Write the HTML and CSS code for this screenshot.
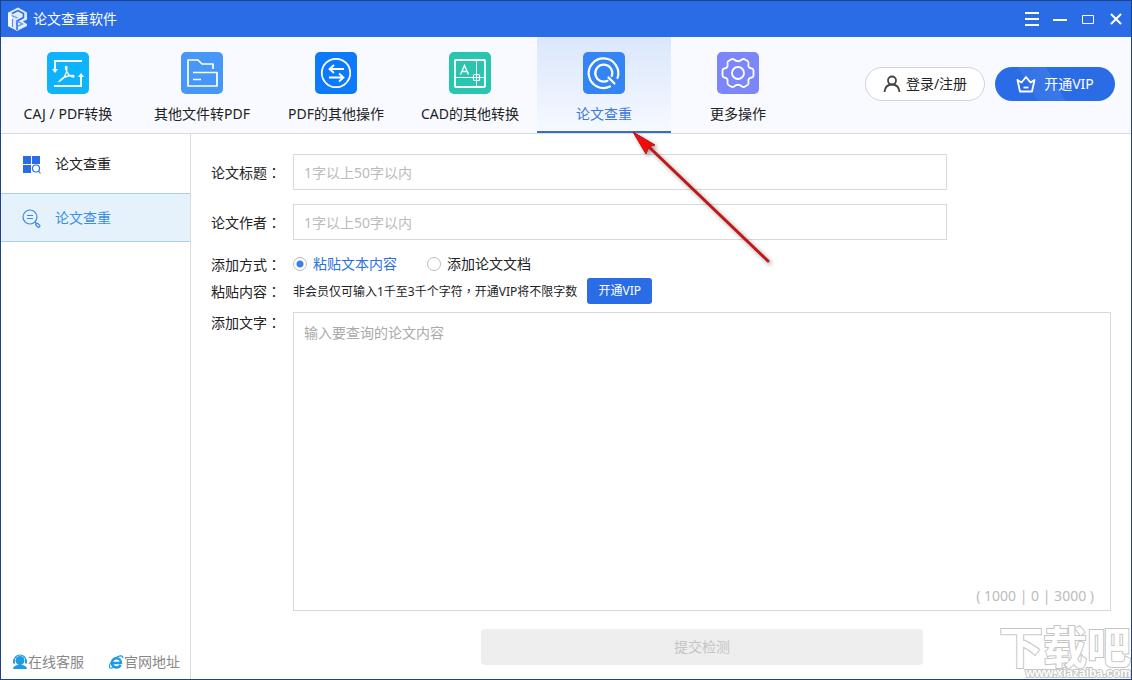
FILE: index.html
```html
<!DOCTYPE html>
<html lang="zh-CN">
<head>
<meta charset="utf-8">
<title>论文查重软件</title>
<link rel="stylesheet" href="styles.css">
</head>
<body>
<div class="window">
  <header class="titlebar">
    <svg class="logo" viewBox="0 0 24 26" width="24" height="26">
      <path d="M3 6.500 13 1.500l9 5v7l-4 2 4 2.500v2L12 25l-9-5z" fill="#dfeaff"/>
      <path d="M3 6.500l4 2.500v13L3 20z" fill="#f6f9ff"/>
      <path d="M7 7.500l6-3 5.500 3v4L12 15v9" fill="none" stroke="#2a6ce6" stroke-width="1.500"/>
      <path d="M6.500 9.500l6 2.500M12 15l5.500 3-5.500 2.500M7.500 13v8" fill="none" stroke="#5b8ff0" stroke-width="1.200"/>
    </svg>
    <h1 class="title">论文查重软件</h1>
    <div class="controls">
      <button class="control" aria-label="菜单"><svg width="14" height="14" viewBox="0 0 14 14"><path d="M0 1h14M0 7h14M0 13h14"/></svg></button>
      <button class="control" aria-label="最小化"><svg width="14" height="14" viewBox="0 0 14 14"><path d="M0 8h14"/></svg></button>
      <button class="control" aria-label="最大化"><svg width="14" height="14" viewBox="0 0 14 14"><path class="thin" d="M1.500 3.500h11v8h-11z"/></svg></button>
      <button class="control" aria-label="关闭"><svg width="14" height="14" viewBox="0 0 14 14"><path d="M2 2l10 10M12 2L2 12"/></svg></button>
    </div>
  </header>

  <div class="toolbar">
    <nav class="tabs">
      <button class="tab">
        <svg class="tab-icon" viewBox="0 0 42 42"><rect width="42" height="42" rx="5" fill="#0db4fb"/>
          <g fill="none" stroke="#fff" stroke-width="1.800"><path d="M35 9H8v10M7 34h27V24"/><path d="M12.500 29c4-1 7.500-8 7.500-13 0-2-2-2-1.500 0 1 5 5 9.500 8 9 1.500-1-.5-2-3-1.500-4 .5-8 2-11 5.500z" stroke-width="1.300"/></g>
          <path d="M5 17h6l-3 4zM31 25h6l-3-4z" fill="#fff"/></svg>
        <span>CAJ / PDF转换</span>
      </button>
      <button class="tab">
        <svg class="tab-icon" viewBox="0 0 42 42"><rect width="42" height="42" rx="5" fill="#4797f8"/>
          <g fill="none" stroke="#fff" stroke-width="1.700" stroke-linejoin="round"><path d="M32 17v-5H21l-4-4H7v26h29V20.500H12M12 27.500h8"/></g></svg>
        <span>其他文件转PDF</span>
      </button>
      <button class="tab">
        <svg class="tab-icon" viewBox="0 0 42 42"><rect width="42" height="42" rx="5" fill="#0d7afc"/>
          <g fill="none" stroke="#fff" stroke-width="1.800"><circle cx="21" cy="21" r="14.200"/><path d="M29 17H15M19 13l-4.500 4 4.500 4M14 25.500h14M24 21.500l4.500 4-4.500 4"/></g></svg>
        <span>PDF的其他操作</span>
      </button>
      <button class="tab">
        <svg class="tab-icon" viewBox="0 0 42 42"><rect width="42" height="42" rx="5" fill="#28c5b1"/>
          <g fill="none" stroke="#fff"><rect x="6" y="8" width="30" height="27" rx="1" stroke-width="1.800"/><path d="M27.500 8v27M6 25.500h30" stroke-width="1"/><rect x="24.500" y="22.500" width="6" height="6" rx="1" stroke-width="1.200"/><path d="M11.500 22.500l4-9 4 9M13 19.500h5" stroke-width="1.400"/></g></svg>
        <span>CAD的其他转换</span>
      </button>
      <button class="tab tab-active" aria-current="page">
        <svg class="tab-icon" viewBox="0 0 42 42"><rect width="42" height="42" rx="5" fill="#3385f5"/>
          <g fill="none" stroke="#fff" stroke-width="2.200" stroke-linecap="round"><path d="M27 34.500A14.800 14.800 0 1 1 34.500 26"/><path d="M24.500 28.800A8.500 8.500 0 1 1 28.800 24"/><path d="M25.500 25.500l6 6"/></g></svg>
        <span>论文查重</span>
      </button>
      <button class="tab">
        <svg class="tab-icon" viewBox="0 0 42 42"><rect width="42" height="42" rx="5" fill="#7a86fa"/>
          <g fill="none" stroke="#fff" stroke-width="1.800" stroke-linejoin="round"><circle cx="21" cy="21" r="6"/><path d="M14 7.500q1.500-1 3 0 4 3.500 8 0 1.500-1 3 0l2.500 1.500q1.500 1 1 3-1 4 3.500 4.500 1.500.5 1.500 2v5q0 1.500-1.500 2-4.500.5-3.500 4.500.5 2-1 3L28 34.500q-1.500 1-3 0-4-3.500-8 0-1.500 1-3 0L11.500 33q-1.500-1-1-3 1-4-3.500-4.500-1.500-.5-1.500-2v-5q0-1.500 1.500-2 4.500-.5 3.500-4.500-.5-2 1-3z"/></g></svg>
        <span>更多操作</span>
      </button>
    </nav>
    <div class="account">
      <button class="pill pill-login">
        <svg width="18" height="18" viewBox="0 0 18 18" fill="none" stroke="#444" stroke-width="1.800"><circle cx="9" cy="5.500" r="4"/><path d="M1.500 17c.5-5 3.500-7.500 7.500-7.500s7 2.500 7.500 7.500"/></svg>
        <span>登录/注册</span>
      </button>
      <button class="pill pill-vip">
        <svg width="20" height="18" viewBox="0 0 20 18" fill="none" stroke="#fff" stroke-width="1.800" stroke-linejoin="round"><path d="M1.500 5l4 2.500L10 2l4.500 5.500 4-2.500L16 16.500H4z"/><path d="M7.500 12.500h5"/></svg>
        <span>开通VIP</span>
      </button>
    </div>
  </div>

  <div class="body">
    <aside class="sidebar">
      <div class="side-head">
        <svg width="20" height="20" viewBox="0 0 20 20"><path d="M1 2h8v8H1zM10 2h8v8h-8zM1 11h8v8H1z" fill="#2a6ce6"/><circle cx="14" cy="14.500" r="3.500" fill="none" stroke="#2a6ce6" stroke-width="1.200"/><path d="M16.500 17l2 2.500" stroke="#2a6ce6" stroke-width="1.200"/></svg>
        <span>论文查重</span>
      </div>
      <a class="side-item" href="#check">
        <svg width="20" height="20" viewBox="0 0 20 20" fill="none" stroke="#3d8ad8" stroke-width="1.200"><circle cx="8" cy="9" r="7"/><path d="M5 7.500h6M5 10.500h6M13 14l2 2"/><rect x="14.500" y="15" width="4.500" height="2.500" rx="1" transform="rotate(42 15 15.500)"/></svg>
        <span>论文查重</span>
      </a>
      <div class="side-links">
        <a class="side-link" href="#service">
          <svg width="16" height="16" viewBox="0 0 16 16"><circle cx="8" cy="6.500" r="4.500" fill="#1d9ce5"/><path d="M2 7a6 6 0 0 1 12 0" fill="none" stroke="#1d9ce5" stroke-width="1.200"/><path d="M1 5.500h2v4H1zM13 5.500h2v4h-2zM1 15q0-3 4.500-4h5q4.500 1 4.500 4z" fill="#1d9ce5"/></svg>
          <span>在线客服</span>
        </a>
        <a class="side-link" href="#site">
          <svg width="16" height="16" viewBox="0 0 16 16" fill="none" stroke="#1d9ce5"><path d="M4 9h9c0-6-8.500-6.500-9-.5-.3 5.500 6.500 6.500 8.500 2.500" stroke-width="2.500"/><path d="M15 4c0-3-3-2.500-6-1C4 6 .5 10.500 1.500 13.500c1 1.500 3 .5 4.500-.3" stroke-width="1.200"/></svg>
          <span>官网地址</span>
        </a>
      </div>
    </aside>

    <main class="main">
      <form class="form">
        <div class="row">
          <label class="label" for="paper-title">论文标题<span lang="zh-TW" class="colon">：</span></label>
          <input class="field" id="paper-title" type="text" placeholder="1字以上50字以内">
        </div>
        <div class="row">
          <label class="label" for="paper-author">论文作者<span lang="zh-TW" class="colon">：</span></label>
          <input class="field" id="paper-author" type="text" placeholder="1字以上50字以内">
        </div>
        <div class="row row-mode" role="radiogroup" aria-labelledby="mode-label">
          <span class="label" id="mode-label">添加方式<span lang="zh-TW" class="colon">：</span></span>
          <div class="options">
            <label class="option option-on"><input class="radio" type="radio" name="mode" checked>粘贴文本内容</label>
            <label class="option"><input class="radio" type="radio" name="mode">添加论文文档</label>
          </div>
        </div>
        <div class="row row-tip">
          <span class="label">粘贴内容<span lang="zh-TW" class="colon">：</span></span>
          <div class="tip">
            <span>非会员仅可输入1千至3千个字符<span lang="zh-TW" class="colon">，</span>开通VIP将不限字数</span>
            <button class="tip-vip" type="button">开通VIP</button>
          </div>
        </div>
        <div class="row row-text">
          <label class="label" for="paper-text">添加文字<span lang="zh-TW" class="colon">：</span></label>
          <div class="editor">
            <textarea class="text" id="paper-text" placeholder="输入要查询的论文内容"></textarea>
            <span class="counter">( 1000 | 0 | 3000 )</span>
          </div>
        </div>
        <div class="actions">
          <button class="submit" type="button" disabled>提交检测</button>
        </div>
      </form>
    </main>
  </div>

  <svg class="arrow" width="150" height="145" viewBox="0 0 150 145">
    <path d="M19 17 138 131" stroke="#c01818" stroke-width="3" stroke-linecap="round"/>
    <path d="M3 2 25 15 21 16 18 19 16 24z" fill="#f40b0b" stroke="#b81515"/>
  </svg>
  <div class="watermark">
    <span class="mark-name">下载吧</span>
    <span class="mark-url">www.xiazaiba.com</span>
  </div>
</div>
</body>
</html>
```
FILE: styles.css
```css
* {
  box-sizing: border-box;
}

body {
  margin: 0;
  font: 14px/20px "Noto Sans", "Noto Sans CJK SC", sans-serif;
  color: #222;
}

button,
input,
textarea {
  font: inherit;
  color: inherit;
}

button {
  padding: 0;
  border: 0;
  background: none;
}

svg {
  flex: none;
}

a {
  color: inherit;
  text-decoration: none;
}

.window {
  position: relative;
  display: flex;
  flex-direction: column;
  min-height: 100vh;
  overflow: hidden;
  border: 1px solid #1f4388;
  background: #fff;
}

.titlebar {
  display: flex;
  align-items: center;
  height: 36px;
  padding: 0 8px 0 4px;
  background: #2a6ce6;
  color: #fff;
}

.title {
  margin: 0 0 0 4px;
  font-size: 14px;
  font-weight: 400;
}

.controls {
  display: flex;
  gap: 14px;
  margin-left: auto;
}

.control {
  display: flex;
}

.control path {
  fill: none;
  stroke: #fff;
  stroke-width: 2;
}

.control .thin {
  stroke-width: 1;
}

.toolbar {
  display: flex;
  justify-content: space-between;
  height: 97px;
  border-bottom: 1px solid #d9dce2;
  background: #f8faff;
}

.tabs {
  display: flex;
}

.tab {
  display: flex;
  flex-direction: column;
  align-items: center;
  gap: 10px;
  width: 134px;
  padding-top: 15px;
  white-space: nowrap;
}

.tab-active {
  border-bottom: 2px solid #3a6fc4;
  background: linear-gradient(#dae7fc, #f6f9ff);
  color: #3a78e0;
}

.tab-icon {
  width: 42px;
  height: 42px;
}

.account {
  display: flex;
  align-items: center;
  gap: 10px;
  padding: 0 16px 2px 0;
}

.pill {
  display: flex;
  align-items: center;
  justify-content: center;
  width: 120px;
  height: 34px;
  border-radius: 17px;
}

.pill-login {
  gap: 5px;
  border: 1px solid #d0d3d8;
  background: #fff;
}

.pill-vip {
  gap: 8px;
  background: linear-gradient(60deg, #2a6ce6 30%, #3673e7 31%, #3a78e8 50%, #2a6ce6 51%);
  color: #fff;
}

.body {
  display: flex;
  flex: 1;
}

.sidebar {
  display: flex;
  flex-direction: column;
  width: 190px;
  border-right: 1px solid #dcdcdc;
}

.side-head,
.side-item {
  display: flex;
  align-items: center;
  gap: 13px;
  padding-left: 21px;
}

.side-head {
  height: 59px;
}

.side-item {
  height: 49px;
  border-top: 1px solid #a9d0e6;
  border-bottom: 1px solid #a9d0e6;
  background: #e5f2fb;
  color: #3d8ee0;
}

.side-links {
  display: flex;
  justify-content: space-between;
  margin-top: auto;
  padding: 0 10px 7px 11px;
  color: #888;
}

.side-link {
  display: flex;
  align-items: center;
}

.main {
  display: flex;
  flex: 1;
  padding: 20px 20px 14px;
}

.form {
  display: flex;
  flex: 1;
  flex-direction: column;
}

.row {
  display: grid;
  grid-template-columns: 82px 1fr;
  align-items: center;
  margin-bottom: 14px;
}

.label {
  height: 20px;
}

.colon {
  font-family: "Noto Sans CJK TC", sans-serif;
}

.field {
  width: 80%;
  height: 36px;
  padding: 0 10px;
  border: 1px solid #d9d9d9;
  background: #fff;
}

.field::placeholder {
  color: #bbb;
}

.row-mode {
  height: 28px;
  margin: -4px 0 0;
}

.options {
  display: flex;
  gap: 30px;
}

.option {
  display: flex;
  align-items: center;
  gap: 6px;
}

.option-on {
  color: #2a72e0;
}

.radio {
  appearance: none;
  width: 14px;
  height: 14px;
  margin: 0;
  border: 1px solid #bbb;
  border-radius: 50%;
  background: #fff;
}

.radio:checked {
  background: radial-gradient(circle, #3a80e6 3px, #fff 4px);
}

.row-tip {
  margin-bottom: 8px;
}

.tip {
  display: flex;
  align-items: center;
  gap: 10px;
  font-size: 12px;
}

.tip-vip {
  width: 65px;
  height: 26px;
  border-radius: 3px;
  background: #2a6ce6;
  color: #fff;
}

.row-text {
  flex: 1;
  align-items: stretch;
  margin-bottom: 18px;
}

.editor {
  position: relative;
  display: flex;
}

.text {
  flex: 1;
  padding: 10px;
  border: 1px solid #d9d9d9;
  background: #fff;
  resize: none;
}

.text::placeholder {
  color: #aaa;
}

.counter {
  position: absolute;
  right: 17px;
  bottom: 5px;
  color: #bbb;
}

.actions {
  display: flex;
  justify-content: center;
  padding-left: 82px;
}

.submit {
  width: 54%;
  height: 36px;
  border-radius: 4px;
  background: #eee;
  color: #c4c4c4;
}

.arrow {
  position: absolute;
  left: 629px;
  top: 129px;
  fill: none;
  filter: drop-shadow(2px 2px 2px #0006);
  pointer-events: none;
}

.watermark {
  position: absolute;
  right: 0;
  bottom: 0;
  display: flex;
  flex-direction: column;
  align-items: flex-end;
  color: #fff;
  font-family: "Noto Sans CJK SC", sans-serif;
  font-weight: 700;
  pointer-events: none;
  paint-order: stroke fill;
  -webkit-text-stroke: 2px #c4c4c4;
}

.mark-name {
  font-size: 44px;
  line-height: 44px;
}

.mark-url {
  font: 700 12px/12px "Liberation Sans", sans-serif;
}
```
